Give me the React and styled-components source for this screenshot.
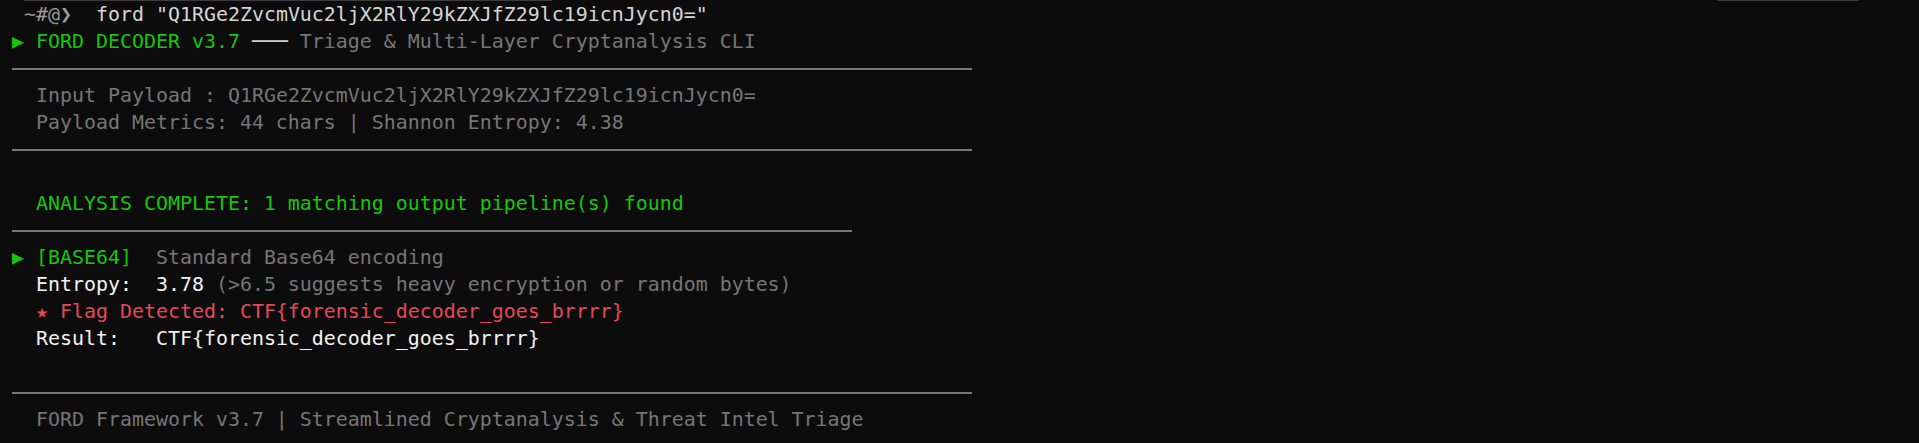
import React from 'react';
import styled, { createGlobalStyle } from 'styled-components';

const GlobalStyle = createGlobalStyle`
  html, body {
    margin: 0;
    padding: 0;
    background: #0c0c0c;
  }
`;

const tones = {
  prompt: '#9a9a9a',
  cmd: '#d6d6d6',
  green: '#16c60c',
  gray: '#767676',
  white: '#f2f2f2',
  dim: '#cccccc',
  red: '#e74856',
};

const Screen = styled.div`
  width: 1919px;
  height: 443px;
  overflow: hidden;
  background: #0c0c0c;
  font-family: 'DejaVu Sans Mono', 'Liberation Mono', monospace;
  font-size: 19.93px;
  color: #cccccc;
`;

const Scrollback = styled.div`
  display: flex;
  height: 1px;
`;

const ScrollEdge = styled.div`
  height: 1px;
  width: ${p => p.$w}px;
  margin-left: ${p => p.$ml}px;
  background: #3c3c3c;
`;

const Body = styled.div`
  padding-left: 12px;
`;

const Line = styled.div`
  height: 27px;
  line-height: 27px;
  white-space: pre;
`;

const Tone = styled.span`
  color: ${p => tones[p.$tone] || tones.dim};
`;

const Rule = styled.div`
  height: 27px;
  display: flex;
  align-items: flex-start;
  padding-top: 13px;
  box-sizing: border-box;

  &::after {
    content: '';
    display: block;
    width: ${p => p.$cols * 12}px;
    height: 2px;
    background: #767676;
  }
`;

const App = () => {
  const payload = 'Q1RGe2ZvcmVuc2ljX2RlY29kZXJfZ29lc19icnJycn0=';
  const flag = 'CTF{forensic_decoder_goes_brrrr}';

  return (
    <>
      <GlobalStyle />
      <Screen>
        <Scrollback>
          <ScrollEdge $ml={24} $w={528} />
          <ScrollEdge $ml={1165} $w={142} />
        </Scrollback>
        <Body>
          <Line>
            <Tone $tone="prompt"> ~#@❯</Tone>
            <Tone $tone="cmd">  ford "{payload}"</Tone>
          </Line>
          <Line>
            <Tone $tone="green">▶ FORD DECODER v3.7 </Tone>
            <Tone $tone="dim">───</Tone>
            <Tone $tone="gray"> Triage &amp; Multi-Layer Cryptanalysis CLI</Tone>
          </Line>
          <Rule $cols={80} />
          <Line>
            <Tone $tone="gray">  Input Payload : {payload}</Tone>
          </Line>
          <Line>
            <Tone $tone="gray">  Payload Metrics: 44 chars | Shannon Entropy: 4.38</Tone>
          </Line>
          <Rule $cols={80} />
          <Line />
          <Line>
            <Tone $tone="green">  ANALYSIS COMPLETE: 1 matching output pipeline(s) found</Tone>
          </Line>
          <Rule $cols={70} />
          <Line>
            <Tone $tone="green">▶ [BASE64]</Tone>
            <Tone $tone="gray">  Standard Base64 encoding</Tone>
          </Line>
          <Line>
            <Tone $tone="white">  Entropy:  3.78</Tone>
            <Tone $tone="gray"> (&gt;6.5 suggests heavy encryption or random bytes)</Tone>
          </Line>
          <Line>
            <Tone $tone="red">  ★ Flag Detected: {flag}</Tone>
          </Line>
          <Line>
            <Tone $tone="white">  Result:   {flag}</Tone>
          </Line>
          <Line />
          <Rule $cols={80} />
          <Line>
            <Tone $tone="gray">  FORD Framework v3.7 | Streamlined Cryptanalysis &amp; Threat Intel Triage</Tone>
          </Line>
        </Body>
      </Screen>
    </>
  );
};

export default App;
